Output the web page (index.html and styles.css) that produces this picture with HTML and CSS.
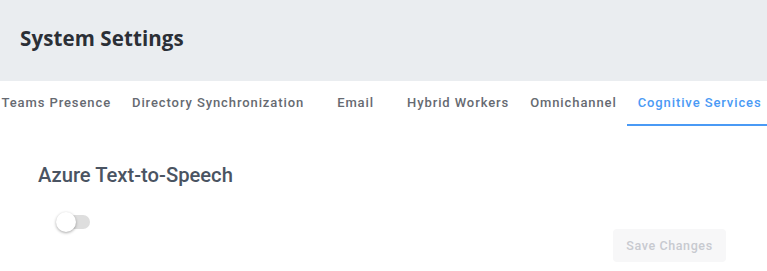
FILE: index.html
```html
<!DOCTYPE html>
<html lang="en">
<head>
    <meta charset="UTF-8">
    <meta name="viewport" content="width=device-width, initial-scale=1.0">
    <title>System Settings</title>
    <link rel="stylesheet" href="styles.css">
</head>
<body>
    <div class='header'>
        <h1 class='title'>System Settings</h1>
    </div>
    <div class='tabs'>
        <div class='strip'>
            <div class='tab'>Teams Presence</div>
            <div class='tab'>Directory Synchronization</div>
            <div class='tab'>Email</div>
            <div class='tab'>Hybrid Workers</div>
            <div class='tab'>Omnichannel</div>
            <div class='tab active'>Cognitive Services</div>
        </div>
    </div>
    <div class='content'>
        <h2 class='section'>Azure Text-to-Speech</h2>
        <div class='switch'>
            <div class='track'></div>
            <div class='knob'></div>
        </div>
        <div class='actions'>
            <button class='save' disabled>Save Changes</button>
        </div>
    </div>
</body>
</html>
```

FILE: styles.css
```css
body {
    margin: 0;
    background-color: white;
    font-family: Roboto, "Liberation Sans", sans-serif;
    overflow: hidden;
}
div.header {
    background-color: #eaedf0;
    height: 81px;
    padding: 0 20px 6px;
    box-sizing: border-box;
    display: flex;
    align-items: center;
}
h1.title {
    margin: 0;
    font-family: "Open Sans", sans-serif;
    font-weight: 700;
    font-size: 20.5px;
    color: #2b2f36;
    letter-spacing: 0.1px;
}
div.tabs {
    height: 45px;
    overflow: hidden;
}
div.strip {
    display: flex;
    margin-left: -9px;
    height: 45px;
}
div.tab {
    min-width: 82px;
    padding: 0 10.5px;
    display: flex;
    align-items: center;
    justify-content: center;
    flex-shrink: 0;
    font-size: 13px;
    font-weight: 500;
    letter-spacing: 0.9px;
    color: #666a71;
    white-space: nowrap;
    border-bottom: 2px solid transparent;
    box-sizing: border-box;
}
div.tab.active {
    color: #4a9af5;
    border-bottom-color: #4a9af5;
}
div.content {
    padding: 37px 38px 0;
}
h2.section {
    margin: 0;
    font-size: 20.2px;
    font-weight: 500;
    color: #4a5462;
}
div.switch {
    position: relative;
    width: 34px;
    height: 20px;
    margin: 25px 0 0 18px;
}
div.track {
    position: absolute;
    top: 3px;
    left: 2px;
    width: 32px;
    height: 14px;
    border-radius: 7px;
    background-color: #dedede;
}
div.knob {
    position: absolute;
    top: 0;
    left: 0;
    width: 20px;
    height: 20px;
    border-radius: 50%;
    background-color: white;
    box-shadow: 0 1px 3px rgba(0, 0, 0, 0.35);
}
div.actions {
    display: flex;
    justify-content: flex-end;
    padding-right: 3px;
    margin-top: -3px;
}
button.save {
    width: 113px;
    height: 33px;
    border: none;
    border-radius: 4px;
    background-color: #f7f7f8;
    color: #c8cad0;
    font-family: Roboto, sans-serif;
    font-size: 12.5px;
    font-weight: 500;
    letter-spacing: 0.6px;
}
```
